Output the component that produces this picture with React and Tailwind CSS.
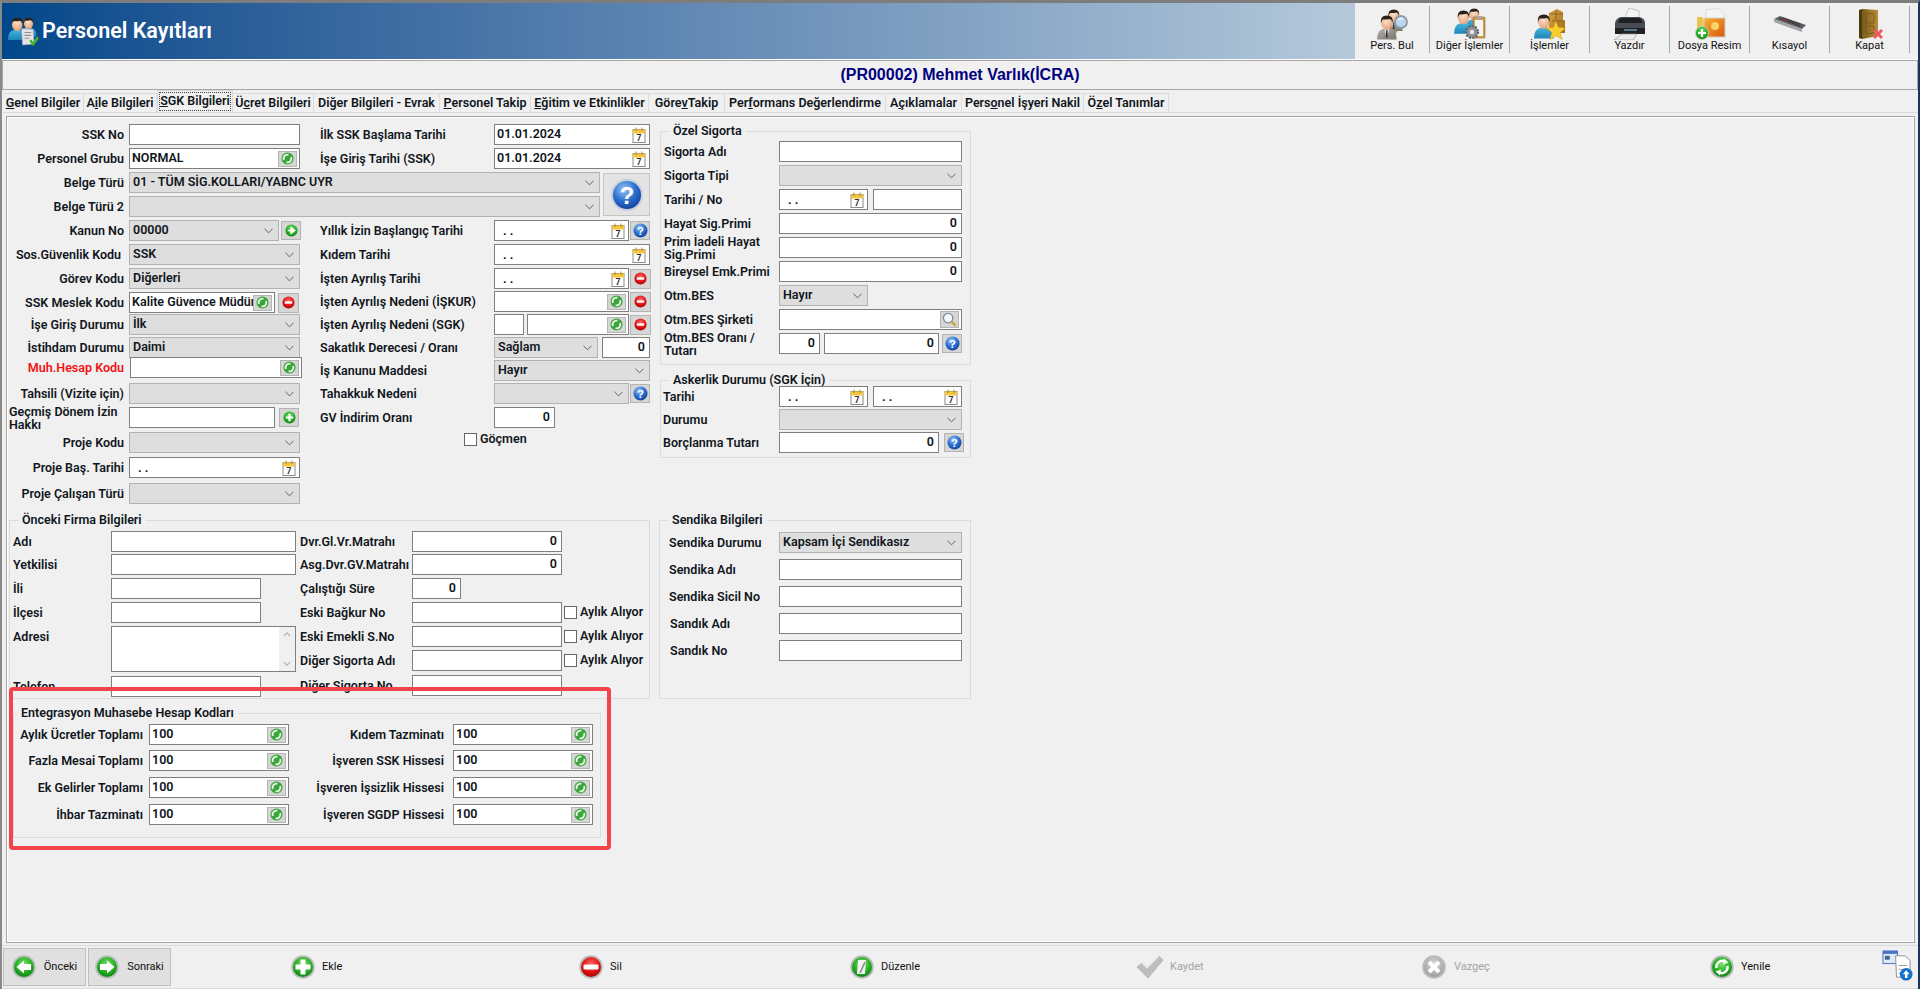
const Defs = () => (
  <svg className="absolute w-0 h-0">
    <defs>
      <radialGradient id="gGreen" cx="50%" cy="35%" r="70%">
        <stop offset="0%" stopColor="#7ee06a" />
        <stop offset="60%" stopColor="#22ad22" />
        <stop offset="100%" stopColor="#0a7a12" />
      </radialGradient>
      <radialGradient id="gRed" cx="50%" cy="35%" r="70%">
        <stop offset="0%" stopColor="#ff6a6a" />
        <stop offset="60%" stopColor="#e01010" />
        <stop offset="100%" stopColor="#a00000" />
      </radialGradient>
      <radialGradient id="gBlue" cx="40%" cy="30%" r="75%">
        <stop offset="0%" stopColor="#9cc6f4" />
        <stop offset="55%" stopColor="#2a6fd0" />
        <stop offset="100%" stopColor="#123f96" />
      </radialGradient>
      <radialGradient id="gGray" cx="50%" cy="35%" r="70%">
        <stop offset="0%" stopColor="#d8d8d8" />
        <stop offset="100%" stopColor="#9a9a9a" />
      </radialGradient>
      <radialGradient id="gFace" cx="45%" cy="35%" r="70%">
        <stop offset="0%" stopColor="#fde2cc" />
        <stop offset="100%" stopColor="#e39c72" />
      </radialGradient>
      <linearGradient id="gShirt" x1="0" x2="0" y1="0" y2="1">
        <stop offset="0%" stopColor="#46b4dc" />
        <stop offset="100%" stopColor="#1c84b8" />
      </linearGradient>
      <linearGradient id="gSuit" x1="0" x2="1" y1="0" y2="1">
        <stop offset="0%" stopColor="#b4b4b0" />
        <stop offset="100%" stopColor="#77736c" />
      </linearGradient>
      <linearGradient id="gDoor" x1="0" x2="1" y1="0" y2="0">
        <stop offset="0%" stopColor="#7a5a18" />
        <stop offset="100%" stopColor="#b88f3c" />
      </linearGradient>
      <linearGradient id="gPic" x1="0" x2="1" y1="0" y2="1">
        <stop offset="0%" stopColor="#f9b233" />
        <stop offset="100%" stopColor="#d8560e" />
      </linearGradient>
      <linearGradient id="gBox" x1="0" x2="1" y1="0" y2="1">
        <stop offset="0%" stopColor="#d8a544" />
        <stop offset="100%" stopColor="#a06f1e" />
      </linearGradient>
    </defs>
  </svg>
);

// little man used by the toolbar and title icons, about 20x24
const Man = ({ x, y, s = 1, body = "url(#gShirt)", suit }) => (
  <g transform={`translate(${x} ${y}) scale(${s})`}>
    <path d="M0 25 Q0 15 7 14 L13 14 Q20 15 20 25 Z" fill={body} />
    {suit && <path d="M7.5 14 L10 24 L12.5 14 Z" fill="#f4f4f4" />}
    {suit && <path d="M9.3 15 H10.7 L11 22 L10 24 L9 22 Z" fill="#333" />}
    <ellipse cx="10" cy="8" rx="5.8" ry="7.2" fill="url(#gFace)" />
    <path d="M4 9 Q2.8 0.5 10 0.5 Q17.2 0.5 16 9 Q15.4 4.6 13 4 Q8.5 5 6 4.4 Q4.6 5.5 4 9 Z" fill="#2c211a" />
  </g>
);

const TitleIcon = () => (
  <svg viewBox="0 0 32 30" className="w-[31px] h-[29px] shrink-0">
    <Man x={13} y={0} s={0.82} />
    <Man x={0} y={0} s={0.95} />
    <path d="M14 12 L26 13 L27 28 L15 29 Z" fill="#e4e4e8" stroke="#a2a2aa" strokeWidth="0.6" />
    <path d="M17 16 h7 M17 19 h7 M17 22 h5" stroke="#8d8d95" strokeWidth="1.1" />
    <path d="M23 24 L26 28 L31 21" fill="none" stroke="#45b32c" strokeWidth="2.6" />
  </svg>
);

const IconFind = () => (
  <svg viewBox="0 0 32 32" className="w-[32px] h-[32px]">
    <path d="M15 31 L22 19" stroke="#b09a62" strokeWidth="3.4" />
    <Man x={9} y={1} s={0.88} body="url(#gSuit)" suit />
    <Man x={1} y={7} s={0.98} body="url(#gSuit)" suit />
    <circle cx="25" cy="14" r="6" fill="#bcd8ee" stroke="#8c9aa6" strokeWidth="1.8" />
    <path d="M22 12 Q24 10 27 11" fill="none" stroke="#fff" strokeWidth="1.2" />
  </svg>
);

const IconOther = () => (
  <svg viewBox="0 0 32 32" className="w-[32px] h-[32px]">
    <Man x={12} y={0} s={0.82} />
    <Man x={0} y={2} s={0.95} />
    <rect x="19" y="9" width="12" height="21" rx="1" fill="#c99f55" stroke="#8a6a2a" strokeWidth="0.6" />
    <rect x="21" y="12" width="8" height="16" fill="#f4f4f4" />
    <rect x="22.5" y="8" width="5" height="3" fill="#a8a8a8" />
    <circle cx="18" cy="24" r="6" fill="#8d9299" stroke="#5d6166" strokeWidth="2.2" strokeDasharray="2 1.4" />
    <circle cx="18" cy="24" r="2.2" fill="#e4e6e8" />
  </svg>
);

const IconOps = () => (
  <svg viewBox="0 0 32 32" className="w-[32px] h-[32px]">
    <path d="M15 5 L23 1 L29 4 L29 12 L31 13 L31 25 L15 25 Z" fill="url(#gBox)" />
    <path d="M22 2 L22 12 M15 6 L29 6 M18 13 L31 13 M24 13 V25" stroke="#85591a" strokeWidth="0.8" />
    <Man x={0} y={6} s={0.98} />
    <path d="M22 13 L24.5 19.5 L31.5 20 L26 24.5 L28 31.5 L22 27.5 L16 31.5 L18 24.5 L12.5 20 L19.5 19.5 Z" fill="#f9cf2e" stroke="#e09c10" strokeWidth="0.6" />
  </svg>
);

const IconPrint = () => (
  <svg viewBox="0 0 32 32" className="w-[32px] h-[32px]">
    <path d="M10 12 L15 0 L25 3 L25 13 Z" fill="#f4f4f4" stroke="#b0b0b0" strokeWidth="0.7" />
    <path d="M1 15 Q2 10 7 9 L25 9 Q31 10 31 15 L31 25 L1 25 Z" fill="#484c52" />
    <path d="M6 10 L26 10 L29 15 L4 15 Z" fill="#1e2024" />
    <path d="M1 20 L31 20 L31 26 L1 26 Z" fill="#1f2125" />
    <path d="M8 26 L23 26 L19 32 L0 32 Z" fill="#ececec" stroke="#9a9a9a" strokeWidth="0.7" />
    <path d="M10 22 H23" stroke="#7fb0d0" strokeWidth="1.2" />
  </svg>
);

const IconFile = () => (
  <svg viewBox="0 0 32 32" className="w-[32px] h-[32px]">
    <path d="M3 9 L8 9 L9 11 L12 11 L12 24 L3 24 Z" fill="#e8c24a" />
    <path d="M12 2 L24 0 L30 6 L31 29 L12 29 Z" fill="#f4f4f4" stroke="#cfcfcf" strokeWidth="0.6" />
    <rect x="10" y="10" width="21" height="19" fill="url(#gPic)" stroke="#d2d2d2" strokeWidth="1" />
    <circle cx="21" cy="18" r="4" fill="#fbd26a" />
    <circle cx="8" cy="25" r="6.5" fill="url(#gGreen)" stroke="#c9c9c9" />
    <path d="M8 21 V29 M4 25 H12" stroke="#fff" strokeWidth="2.2" />
  </svg>
);

const IconKeys = () => (
  <svg viewBox="0 0 32 32" className="w-[32px] h-[32px]">
    <path d="M0 11 L6 8 L32 17 L28 21 Z" fill="#5c5f63" />
    <path d="M0 11 L28 21 L28 24 L0 14 Z" fill="#a1a3a6" />
    <path d="M6 10.6 L26 18 M9 10 L27 16.6" stroke="#2a2b2e" strokeWidth="1.1" strokeDasharray="1.5 0.6" />
    <path d="M8 11 L14 13.2" stroke="#b02f2f" strokeWidth="1.2" />
  </svg>
);

const IconDoor = () => (
  <svg viewBox="0 0 32 32" className="w-[32px] h-[32px]">
    <path d="M8 1 L24 2 L24 28 L8 31 Z" fill="url(#gDoor)" />
    <path d="M8 1 L5 2 L5 30 L8 31 Z" fill="#4f3a0e" />
    <path d="M12 5 L20 6 L20 15 L12 15 Z M12 18 L20 18 L20 25 L12 26 Z" fill="none" stroke="#6d5113" strokeWidth="0.7" />
    <path d="M20 22 L28 30 M28 22 L20 30" stroke="#ee5a62" strokeWidth="3" />
  </svg>
);

const ToolBtn = ({ icon, label, className }) => (
  <div className={`flex flex-col items-center h-[47px] border-r border-[#a8a8a8] ${className}`}>
    <div className="h-[33px] pt-[2px]">{icon}</div>
    <span className="text-[11px] leading-[14px] whitespace-nowrap text-[#111] font-normal">{label}</span>
  </div>
);

const Calendar = () => (
  <svg viewBox="0 0 14 16" className="w-[14px] h-[16px] shrink-0">
    <rect x="1" y="2.5" width="12" height="13" fill="#fff" stroke="#8a8a8a" />
    <rect x="1" y="2.5" width="12" height="4" fill="#f4c63e" />
    <path d="M4 0.5 V4 M10 0.5 V4" stroke="#b08a20" />
    <text x="7" y="14" fontSize="8.5" fontWeight="700" textAnchor="middle" fill="#333" fontFamily="Roboto, sans-serif">7</text>
  </svg>
);

const Chevron = () => (
  <svg viewBox="0 0 10 6" className="w-[9px] h-[6px] shrink-0">
    <path d="M0.5 0.5 L5 5 L9.5 0.5" fill="none" stroke="#555" />
  </svg>
);

// small grey square buttons next to the inputs
const Square = ({ className, children }) => (
  <div className={`flex items-center justify-center shrink-0 bg-[#d6d6d6] border border-[#b4b4b4] ${className}`}>{children}</div>
);

const RefreshDot = () => (
  <svg viewBox="0 0 14 14" className="w-[13px] h-[13px]">
    <circle cx="7" cy="7" r="6.5" fill="#3aa63a" />
    <path d="M3.2 8.5 A4 4 0 0 1 8 3" fill="none" stroke="#eaf7e6" strokeWidth="2" />
    <path d="M10.8 5.5 A4 4 0 0 1 6 11" fill="none" stroke="#eaf7e6" strokeWidth="2" />
  </svg>
);

const Refresh = () => (
  <Square className="w-[19px] h-[16px] mr-[2px] bg-[#cfd6cf]">
    <RefreshDot />
  </Square>
);

const AddBtn = ({ arrow, className }) => (
  <Square className={`w-[20px] h-[19px] ${className}`}>
    <svg viewBox="0 0 14 14" className="w-[13px] h-[13px]">
      <circle cx="7" cy="7" r="6.5" fill="url(#gGreen)" />
      {arrow ? (
        <path d="M3 7 H8 M6.5 3.8 L10.5 7 L6.5 10.2 Z" stroke="#fff" strokeWidth="1.4" fill="#fff" />
      ) : (
        <path d="M7 3 V11 M3 7 H11" stroke="#fff" strokeWidth="2.4" />
      )}
    </svg>
  </Square>
);

const MinusBtn = ({ className }) => (
  <Square className={`w-[21px] h-[20px] ${className}`}>
    <svg viewBox="0 0 14 14" className="w-[13px] h-[13px]">
      <circle cx="7" cy="7" r="6.5" fill="url(#gRed)" />
      <path d="M3 7 H11" stroke="#fff" strokeWidth="2.6" />
    </svg>
  </Square>
);

const HelpBtn = ({ className }) => (
  <Square className={`w-[20px] h-[19px] ${className}`}>
    <svg viewBox="0 0 16 16" className="w-[15px] h-[15px]">
      <circle cx="8" cy="8" r="7.5" fill="url(#gBlue)" />
      <text x="8" y="12.5" fontSize="12" fontWeight="700" textAnchor="middle" fill="#fff" fontFamily="Liberation Sans, sans-serif">?</text>
    </svg>
  </Square>
);

const Label = ({ className, children }) => (
  <div className={`shrink-0 leading-[13px] ${className}`}>{children}</div>
);

const Input = ({ className = "", value, num, date, refresh, cal, children }) => (
  <div className={`flex items-center h-[21px] shrink-0 bg-white border border-[#7f7f7f] overflow-hidden ${num ? "justify-end pr-[4px]" : "pl-[2px]"} ${className}`}>
    {date && <span className="flex-1 pl-[6px] pt-[2px] leading-none font-bold">. .</span>}
    {value && <span className={`whitespace-nowrap ${refresh ? "flex-1 overflow-hidden" : ""} ${cal ? "flex-1" : ""}`}>{value}</span>}
    {refresh && !value && <span className="flex-1" />}
    {refresh && <Refresh />}
    {cal && <span className="mr-[3px]"><Calendar /></span>}
    {children}
  </div>
);

const Select = ({ className = "", value }) => (
  <div className={`flex items-center h-[21px] shrink-0 bg-[#dedede] border border-[#b2b2b2] pl-[3px] pr-[5px] ${className}`}>
    <span className="flex-1 whitespace-nowrap">{value}</span>
    <Chevron />
  </div>
);

const Row = ({ className = "", children }) => (
  <div className={`flex items-center h-[21px] ${className}`}>{children}</div>
);

const CheckBox = ({ className = "" }) => (
  <div className={`w-[13px] h-[13px] shrink-0 bg-white border border-[#666] ${className}`} />
);

const Group = ({ title, className = "", legend = "ml-[8px]", children }) => (
  <fieldset className={`border border-[#dcdcdc] min-w-0 ${className}`}>
    <legend className={`px-[4px] h-[14px] leading-[14px] ${legend}`}>{title}</legend>
    {children}
  </fieldset>
);

const tabs = [
  { w: "w-[81px]", t: <><u>G</u>enel Bilgiler</> },
  { w: "w-[73px]", t: <>A<u>i</u>le Bilgileri</> },
  { w: "w-[76px]", t: <><u>S</u>GK Bilgileri</>, active: true },
  { w: "w-[81px]", t: <>Ü<u>c</u>ret Bilgileri</> },
  { w: "w-[126px]", t: <>Di<u>ğ</u>er Bilgileri - Evrak</> },
  { w: "w-[91px]", t: <><u>P</u>ersonel Takip</> },
  { w: "w-[118px]", t: <><u>E</u>ğitim ve Etkinlikler</> },
  { w: "w-[76px]", t: <>Göre<u>v</u> Takip</> },
  { w: "w-[161px]", t: <>Per<u>f</u>ormans Değerlendirme</> },
  { w: "w-[76px]", t: <>A<u>ç</u>ıklamalar</> },
  { w: "w-[122px]", t: <>Pers<u>o</u>nel İşyeri Nakil</> },
  { w: "w-[85px]", t: <>Ö<u>z</u>el Tanımlar</> },
];

const TabBar = () => (
  <div className="flex items-end h-[22px] mt-[1px] ml-[1px] border-b border-[#dadada]">
    {tabs.map((tab, i) =>
      tab.active ? (
        <div key={i} className={`${tab.w} h-[22px] p-[1px] bg-[#f0f0f0] border-x border-t border-[#d8d8d8]`}>
          <div className="h-full flex items-center justify-center border border-dotted border-[#444] whitespace-nowrap">{tab.t}</div>
        </div>
      ) : (
        <div key={i} className={`${tab.w} h-[19px] flex items-center justify-center border-r border-t border-[#dcdcdc] whitespace-nowrap`}>{tab.t}</div>
      )
    )}
  </div>
);

const BigHelp = () => (
  <div className="flex items-center justify-center w-[47px] h-[43px] ml-[3px] mt-[1px] bg-[#e4e4e4] border border-[#c4c4c4]">
    <svg viewBox="0 0 40 40" className="w-[36px] h-[34px]">
      <circle cx="20" cy="20" r="19" fill="#c9d2dc" />
      <circle cx="20" cy="20" r="16.5" fill="url(#gBlue)" />
      <text x="20" y="30" fontSize="28" fontWeight="700" textAnchor="middle" fill="#fff" fontFamily="Liberation Sans, sans-serif">?</text>
    </svg>
  </div>
);

const LabelA = ({ className = "", children }) => <Label className={`w-[115px] mr-[5px] text-right ${className}`}>{children}</Label>;
const LabelB = ({ children }) => <Label className="w-[174px]">{children}</Label>;

const TopForm = () => (
  <div className="w-[641px] shrink-0">
    <div className="flex">
      <div className="w-[291px] shrink-0">
        <Row><LabelA>SSK No</LabelA><Input className="w-[171px]" /></Row>
        <Row className="mt-[3px]"><LabelA>Personel Grubu</LabelA><Input className="w-[171px]" value="NORMAL" refresh /></Row>
      </div>
      <div className="ml-[20px]">
        <Row><LabelB>İlk SSK Başlama Tarihi</LabelB><Input className="w-[156px]" value="01.01.2024" cal /></Row>
        <Row className="mt-[3px]"><LabelB>İşe Giriş Tarihi (SSK)</LabelB><Input className="w-[156px]" value="01.01.2024" cal /></Row>
      </div>
    </div>
    <div className="flex mt-[3px]">
      <div>
        <Row><LabelA>Belge Türü</LabelA><Select className="w-[471px]" value="01 - TÜM SİG.KOLLARI/YABNC UYR" /></Row>
        <Row className="mt-[3px]"><LabelA>Belge Türü 2</LabelA><Select className="w-[471px]" /></Row>
      </div>
      <BigHelp />
    </div>
    <div className="flex mt-[3px]">
      <div className="w-[291px] shrink-0">
        <Row><LabelA>Kanun No</LabelA><Select className="w-[150px]" value="00000" /><AddBtn arrow className="ml-[2px]" /></Row>
        <Row className="mt-[3px]"><LabelA className="pr-[3px]">Sos.Güvenlik Kodu</LabelA><Select className="w-[171px]" value="SSK" /></Row>
        <Row className="mt-[3px]"><LabelA>Görev Kodu</LabelA><Select className="w-[171px]" value="Diğerleri" /></Row>
        <Row className="mt-[3px]"><LabelA>SSK Meslek Kodu</LabelA><Input className="w-[146px]" value="Kalite Güvence Müdürü" refresh /><MinusBtn className="ml-[3px]" /></Row>
        <Row className="mt-[1px]"><LabelA>İşe Giriş Durumu</LabelA><Select className="w-[171px]" value="İlk" /></Row>
        <Row className="mt-[2px]"><LabelA>İstihdam Durumu</LabelA><Select className="w-[171px]" value="Daimi" /></Row>
        <Row className="-mt-[1px]"><LabelA className="text-[#f01414]">Muh.Hesap Kodu</LabelA><Input className="w-[172px] ml-[1px] relative" refresh /></Row>
        <Row className="mt-[5px]"><LabelA>Tahsili (Vizite için)</LabelA><Select className="w-[171px]" /></Row>
        <Row className="mt-[3px]"><Label className="w-[115px] mr-[5px] pr-[2px]">Geçmiş Dönem İzin Hakkı</Label><Input className="w-[146px]" /><AddBtn className="ml-[4px]" /></Row>
        <Row className="mt-[4px]"><LabelA>Proje Kodu</LabelA><Select className="w-[171px]" /></Row>
        <Row className="mt-[4px]"><LabelA>Proje Baş. Tarihi</LabelA><Input className="w-[171px]" date cal /></Row>
        <Row className="mt-[5px]"><LabelA>Proje Çalışan Türü</LabelA><Select className="w-[171px]" /></Row>
      </div>
      <div className="ml-[20px]">
        <Row><LabelB>Yıllık İzin Başlangıç Tarihi</LabelB><Input className="w-[135px]" date cal /><HelpBtn className="ml-[1px]" /></Row>
        <Row className="mt-[3px]"><LabelB>Kıdem Tarihi</LabelB><Input className="w-[156px]" date cal /></Row>
        <Row className="mt-[3px]"><LabelB>İşten Ayrılış Tarihi</LabelB><Input className="w-[135px]" date cal /><MinusBtn className="ml-[1px]" /></Row>
        <Row className="mt-[2px]"><LabelB>İşten Ayrılış Nedeni (İŞKUR)</LabelB><Input className="w-[135px]" refresh /><MinusBtn className="ml-[1px]" /></Row>
        <Row className="mt-[2px]"><LabelB>İşten Ayrılış Nedeni (SGK)</LabelB><Input className="w-[30px]" /><Input className="w-[102px] ml-[3px]" refresh /><MinusBtn className="ml-[1px]" /></Row>
        <Row className="mt-[2px]"><LabelB>Sakatlık Derecesi / Oranı</LabelB><Select className="w-[104px]" value="Sağlam" /><Input className="w-[48px] ml-[4px]" num value="0" /></Row>
        <Row className="mt-[2px]"><LabelB>İş Kanunu Maddesi</LabelB><Select className="w-[156px]" value="Hayır" /></Row>
        <Row className="mt-[2px]"><LabelB>Tahakkuk Nedeni</LabelB><Select className="w-[135px]" /><HelpBtn className="ml-[1px]" /></Row>
        <Row className="mt-[3px]"><LabelB>GV İndirim Oranı</LabelB><Input className="w-[61px]" num value="0" /></Row>
        <div className="flex items-center ml-[144px] mt-[5px] h-[13px]"><CheckBox /><span className="ml-[3px]">Göçmen</span></div>
      </div>
    </div>
  </div>
);

const LabelC = ({ className = "w-[118px] pl-[3px]", children }) => <Label className={className}>{children}</Label>;

const Search = () => (
  <Square className="w-[19px] h-[17px] mr-[2px]">
    <svg viewBox="0 0 16 16" className="w-[15px] h-[15px]">
      <circle cx="6.5" cy="6.5" r="5" fill="#f6f9fc" stroke="#7e8b99" strokeWidth="1.4" />
      <path d="M10 10 L14.5 14.5" stroke="#c9a33b" strokeWidth="2.4" />
    </svg>
  </Square>
);

const SideForm = () => (
  <div className="ml-[10px] w-[311px]">
    <Group title="Özel Sigorta" className="h-[241px]">
      <div className="pt-[3px]">
        <Row><LabelC>Sigorta Adı</LabelC><Input className="w-[183px]" /></Row>
        <Row className="mt-[3px]"><LabelC>Sigorta Tipi</LabelC><Select className="w-[183px]" /></Row>
        <Row className="mt-[3px]"><LabelC>Tarihi / No</LabelC><Input className="w-[89px]" date cal /><Input className="w-[89px] ml-[5px]" /></Row>
        <Row className="mt-[3px]"><LabelC>Hayat Sig.Primi</LabelC><Input className="w-[183px]" num value="0" /></Row>
        <Row className="mt-[3px]"><LabelC className="w-[118px] pl-[3px] pr-[4px]">Prim İadeli Hayat Sig.Primi</LabelC><Input className="w-[183px]" num value="0" /></Row>
        <Row className="mt-[3px]"><LabelC>Bireysel Emk.Primi</LabelC><Input className="w-[183px]" num value="0" /></Row>
        <Row className="mt-[3px]"><LabelC>Otm.BES</LabelC><Select className="w-[89px]" value="Hayır" /></Row>
        <Row className="mt-[3px]"><LabelC>Otm.BES Şirketi</LabelC><Input className="w-[183px] justify-end pr-0"><span className="flex-1" /><Search /></Input></Row>
        <Row className="mt-[3px]"><LabelC className="w-[118px] pl-[3px] pr-[8px]">Otm.BES Oranı / Tutarı</LabelC><Input className="w-[41px]" num value="0" /><Input className="w-[115px] ml-[4px]" num value="0" /><HelpBtn className="ml-[3px]" /></Row>
      </div>
    </Group>
    <Group title="Askerlik Durumu (SGK İçin)" className="h-[85px] mt-[8px]">
      <div className="-mt-[1px]">
        <Row><LabelC className="w-[118px] pl-[2px]">Tarihi</LabelC><Input className="w-[89px]" date cal /><Input className="w-[89px] ml-[5px]" date cal /></Row>
        <Row className="mt-[2px]"><LabelC className="w-[118px] pl-[2px]">Durumu</LabelC><Select className="w-[183px]" /></Row>
        <Row className="mt-[2px]"><LabelC className="w-[118px] pl-[2px]">Borçlanma Tutarı</LabelC><Input className="w-[160px]" num value="0" /><HelpBtn className="ml-[5px]" /></Row>
      </div>
    </Group>
  </div>
);

const Previous = () => (
  <Group title="Önceki Firma Bilgileri" className="w-[641px] h-[186px] shrink-0">
    <div className="flex pt-[4px] pl-[3px]">
      <div className="w-[287px] shrink-0">
        <Row><Label className="w-[98px]">Adı</Label><Input className="w-[185px]" /></Row>
        <Row className="mt-[2px]"><Label className="w-[98px]">Yetkilisi</Label><Input className="w-[185px]" /></Row>
        <Row className="mt-[3px]"><Label className="w-[98px]">İli</Label><Input className="w-[150px]" /></Row>
        <Row className="mt-[3px]"><Label className="w-[98px]">İlçesi</Label><Input className="w-[150px]" /></Row>
        <div className="flex mt-[3px]">
          <Label className="w-[98px] pt-[4px]">Adresi</Label>
          <div className="flex justify-end w-[185px] h-[46px] bg-white border border-[#7f7f7f]">
            <div className="flex flex-col items-center justify-between w-[16px] h-full py-[5px] bg-[#f0f0f0]">
              <svg viewBox="0 0 10 6" className="w-[8px] h-[5px]"><path d="M1 5 L5 1 L9 5" fill="none" stroke="#b0b0b0" strokeWidth="1.4" /></svg>
              <svg viewBox="0 0 10 6" className="w-[8px] h-[5px]"><path d="M1 1 L5 5 L9 1" fill="none" stroke="#b0b0b0" strokeWidth="1.4" /></svg>
            </div>
          </div>
        </div>
        <Row className="mt-[4px]"><Label className="w-[98px]">Telefon</Label><Input className="w-[150px]" /></Row>
      </div>
      <div>
        <Row><Label className="w-[112px]">Dvr.Gl.Vr.Matrahı</Label><Input className="w-[150px]" num value="0" /></Row>
        <Row className="mt-[2px]"><Label className="w-[112px]">Asg.Dvr.GV.Matrahı</Label><Input className="w-[150px]" num value="0" /></Row>
        <Row className="mt-[3px]"><Label className="w-[112px]">Çalıştığı Süre</Label><Input className="w-[49px]" num value="0" /></Row>
        <Row className="mt-[3px]"><Label className="w-[112px]">Eski Bağkur No</Label><Input className="w-[150px]" /><CheckBox className="ml-[2px]" /><span className="ml-[3px] whitespace-nowrap">Aylık Alıyor</span></Row>
        <Row className="mt-[3px]"><Label className="w-[112px]">Eski Emekli S.No</Label><Input className="w-[150px]" /><CheckBox className="ml-[2px]" /><span className="ml-[3px] whitespace-nowrap">Aylık Alıyor</span></Row>
        <Row className="mt-[3px]"><Label className="w-[112px]">Diğer Sigorta Adı</Label><Input className="w-[150px]" /><CheckBox className="ml-[2px]" /><span className="ml-[3px] whitespace-nowrap">Aylık Alıyor</span></Row>
        <Row className="mt-[4px]"><Label className="w-[112px]">Diğer Sigorta No</Label><Input className="w-[150px]" /></Row>
      </div>
    </div>
  </Group>
);

const Union = () => (
  <Group title="Sendika Bilgileri" className="w-[312px] h-[186px] ml-[9px]">
    <div className="pt-[5px]">
      <Row><Label className="w-[119px] pl-[9px]">Sendika Durumu</Label><Select className="w-[183px]" value="Kapsam İçi Sendikasız" /></Row>
      <Row className="mt-[6px]"><Label className="w-[119px] pl-[9px]">Sendika Adı</Label><Input className="w-[183px]" /></Row>
      <Row className="mt-[6px]"><Label className="w-[119px] pl-[9px]">Sendika Sicil No</Label><Input className="w-[183px]" /></Row>
      <Row className="mt-[6px]"><Label className="w-[119px] pl-[10px]">Sandık Adı</Label><Input className="w-[183px]" /></Row>
      <Row className="mt-[6px]"><Label className="w-[119px] pl-[10px]">Sandık No</Label><Input className="w-[183px]" /></Row>
    </div>
  </Group>
);

const integration = [
  { a: "Aylık Ücretler Toplamı", b: "Kıdem Tazminatı", mt: "" },
  { a: "Fazla Mesai Toplamı", b: "İşveren SSK Hissesi", mt: "mt-[5px]" },
  { a: "Ek Gelirler Toplamı", b: "İşveren İşsizlik Hissesi", mt: "mt-[6px]" },
  { a: "İhbar Tazminatı", b: "İşveren SGDP Hissesi", mt: "mt-[6px]" },
];

const Integration = () => (
  <Group title="Entegrasyon Muhasebe Hesap Kodları" className="w-[588px] h-[132px] ml-[4px] mt-[7px]" legend="ml-[3px]">
    <div className="pt-[4px]">
      {integration.map((r) => (
        <Row key={r.a} className={r.mt}>
          <Label className="w-[129px] text-right whitespace-nowrap">{r.a}</Label>
          <Input className="w-[140px] ml-[6px]" value="100" refresh />
          <Label className="w-[155px] text-right">{r.b}</Label>
          <Input className="w-[140px] ml-[9px]" value="100" refresh />
        </Row>
      ))}
    </div>
  </Group>
);

const Glossy = ({ fill, children }) => (
  <svg viewBox="0 0 24 24" className="w-[24px] h-[24px] shrink-0">
    <circle cx="12" cy="12" r="11.8" fill="#b9bdb9" />
    <circle cx="12" cy="12" r="10" fill={fill} />
    {children}
  </svg>
);

const ArrowLeft = () => <Glossy fill="url(#gGreen)"><path d="M4.5 12 L12 5.5 V9 H19 V15 H12 V18.5 Z" fill="#fff" /></Glossy>;
const ArrowRight = () => <Glossy fill="url(#gGreen)"><path d="M19.5 12 L12 5.5 V9 H5 V15 H12 V18.5 Z" fill="#fff" /></Glossy>;
const Plus = () => <Glossy fill="url(#gGreen)"><path d="M9.5 4.5 H14.5 V9.5 H19.5 V14.5 H14.5 V19.5 H9.5 V14.5 H4.5 V9.5 H9.5 Z" fill="#fff" /></Glossy>;
const Minus = () => <Glossy fill="url(#gRed)"><rect x="4.5" y="9.5" width="15" height="5" rx="1" fill="#fff" /></Glossy>;
const Edit = () => (
  <Glossy fill="url(#gGreen)">
    <path d="M8 5 H16 L15 19 H7 Z" fill="#f2f2f2" />
    <path d="M15 7 L10 18" stroke="#8a8a8a" strokeWidth="1.6" />
  </Glossy>
);
const Cancel = () => <Glossy fill="url(#gGray)"><path d="M7 7 L17 17 M17 7 L7 17" stroke="#fff" strokeWidth="4" /></Glossy>;
const Reload = () => (
  <Glossy fill="url(#gGreen)">
    <path d="M6.5 13 A6 6 0 0 1 15 6.5" fill="none" stroke="#fff" strokeWidth="2.4" />
    <path d="M17.5 11 A6 6 0 0 1 9 17.5" fill="none" stroke="#fff" strokeWidth="2.4" />
    <path d="M14 3.5 L18.5 7.5 L13 9.5 Z M10 20.5 L5.5 16.5 L11 14.5 Z" fill="#fff" />
  </Glossy>
);
const Check = () => (
  <svg viewBox="0 0 28 24" className="w-[28px] h-[24px] shrink-0">
    <path d="M1 12 L6 8 L11 13 L23 1 L27 5 L12 23 Z" fill="#bdbdbd" stroke="#a5a5a5" strokeWidth="0.6" />
    <path d="M6 8 L11 13 L23 1" fill="none" stroke="#e6e6e6" strokeWidth="1.2" />
  </svg>
);

const NavBtn = ({ icon, label, className }) => (
  <div className={`flex items-center justify-center h-[38px] w-[83px] bg-[#e0e0e0] border border-[#c0c0c0] ${className}`}>
    {icon}
    <span className="ml-[8px] text-[#111]">{label}</span>
  </div>
);

const actions = [
  { w: "w-[288px]", gap: "ml-[7px]", icon: <Plus />, label: "Ekle" },
  { w: "w-[271px]", gap: "ml-[7px]", icon: <Minus />, label: "Sil" },
  { w: "w-[286px]", gap: "ml-[7px]", icon: <Edit />, label: "Düzenle" },
  { w: "w-[286px]", gap: "ml-[6px]", icon: <Check />, label: "Kaydet", off: true },
  { w: "w-[288px]", gap: "ml-[8px]", icon: <Cancel />, label: "Vazgeç", off: true },
  { w: "w-[172px]", gap: "ml-[7px]", icon: <Reload />, label: "Yenile" },
];

const Footer = () => (
  <div className="flex items-center h-[44px] mt-[2px] pl-[1px] border-t border-b border-[#dcdcdc] text-[11px] font-normal">
    <NavBtn icon={<ArrowLeft />} label="Önceki" />
    <NavBtn icon={<ArrowRight />} label="Sonraki" className="ml-[2px]" />
    <div className="flex items-center ml-[120px]">
      {actions.map((a) => (
        <div key={a.label} className={`flex items-center ${a.w}`}>
          {a.icon}
          <span className={`${a.gap} ${a.off ? "text-[#a4a4a4]" : "text-[#111]"}`}>{a.label}</span>
        </div>
      ))}
    </div>
    <svg viewBox="0 0 32 32" className="w-[31px] h-[31px] -mt-[4px]">
      <rect x="1" y="1" width="15" height="13" fill="#dfe8f6" stroke="#4a72c4" />
      <rect x="1" y="1" width="15" height="3" fill="#4a72c4" />
      <rect x="3" y="6" width="5" height="4" fill="#44618f" />
      <path d="M14 6 H24 L29 11 V28 H15 Z" fill="#fff" stroke="#8b8f96" />
      <path d="M17 16 H26 M17 20 H26 M17 24 H24" stroke="#9aa0a8" />
      <circle cx="25" cy="25" r="6.5" fill="#1572c9" />
      <path d="M25 21 L28.5 25 H26.3 V29 H23.7 V25 H21.5 Z" fill="#fff" />
    </svg>
  </div>
);

export default function App() {
  return (
    <div className="relative flex flex-col w-[1920px] h-[989px] overflow-hidden bg-[#f0f0f0] border-t-[3px] border-t-[#7d7d7d] border-l-2 border-l-[#8a8a8a] border-r-2 border-r-[#1c3560] font-['Roboto',sans-serif] font-semibold text-[12.5px] text-[#10161c]">
      <Defs />
      <div className="flex h-[56px] shrink-0">
        <div className="flex-1 flex items-center pl-[6px] bg-gradient-to-r from-[#00478a] to-[#b5c9da]">
          <TitleIcon />
          <span className="ml-[3px] text-[21.5px] font-semibold text-white">Personel Kayıtları</span>
        </div>
        <div className="flex w-[563px] pt-[3px]">
          <ToolBtn className="w-[75px]" icon={<IconFind />} label="Pers. Bul" />
          <ToolBtn className="w-[80px]" icon={<IconOther />} label="Diğer İşlemler" />
          <ToolBtn className="w-[80px]" icon={<IconOps />} label="İşlemler" />
          <ToolBtn className="w-[80px]" icon={<IconPrint />} label="Yazdır" />
          <ToolBtn className="w-[80px]" icon={<IconFile />} label="Dosya Resim" />
          <ToolBtn className="w-[80px]" icon={<IconKeys />} label="Kısayol" />
          <ToolBtn className="w-[80px]" icon={<IconDoor />} label="Kapat" />
        </div>
      </div>
      <div className="h-[1px] shrink-0 bg-white" />
      <div className="flex items-center justify-center h-[30px] shrink-0 border border-[#a6a6a6] text-[16px] font-bold text-[#000080] font-['Liberation_Sans',sans-serif]">
        (PR00002) Mehmet Varlık(İCRA)
      </div>
      <TabBar />
      <div className="flex-1 ml-[4px] mr-[3px] mt-[3px] pt-[7px] pl-[2px] border border-[#a6a6a6] outline outline-1 outline-white -outline-offset-2">
        <div className="flex h-[389px]">
          <TopForm />
          <SideForm />
        </div>
        <div className="flex">
          <Previous />
          <Union />
        </div>
        <Integration />
      </div>
      <Footer />
      {/* red marker drawn over the screenshot */}
      <div className="absolute left-[7px] top-[684px] w-[602px] h-[163px] border-4 border-[#f2444a] rounded-[4px]" />
    </div>
  );
}
